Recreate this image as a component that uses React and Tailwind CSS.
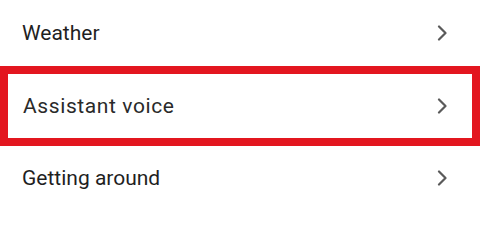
const Chevron = () => (
  <svg width="12" height="16" viewBox="0 0 12 16" fill="none" className="shrink-0">
    <polyline points="3,1.5 9.5,8 3,14.5" stroke="#5a5a5a" strokeWidth="2.2" strokeLinecap="round" strokeLinejoin="round" />
  </svg>
);

const Row = ({ label, className }) => (
  <div className={"flex items-center justify-between pl-[22px] pr-[32px] " + className}>
    <span className="text-[21px] leading-none text-[#1f1f1f]">{label}</span>
    <Chevron />
  </div>
);

export default function App() {
  return (
    <div className="w-[480px] h-[208px] overflow-hidden bg-white" style={{ fontFamily: "Roboto, 'Noto Sans', sans-serif" }}>
      <Row label="Weather" className="h-[66px]" />
      <div className="h-[80px] border-[8px] border-[#e3161f] flex items-center justify-between pl-[15px] pr-[24px]">
        <span className="text-[21px] leading-none tracking-[0.6px] text-[#2a2a2a]">Assistant voice</span>
        <Chevron />
      </div>
      <Row label="Getting around" className="h-[64px]" />
    </div>
  );
}
